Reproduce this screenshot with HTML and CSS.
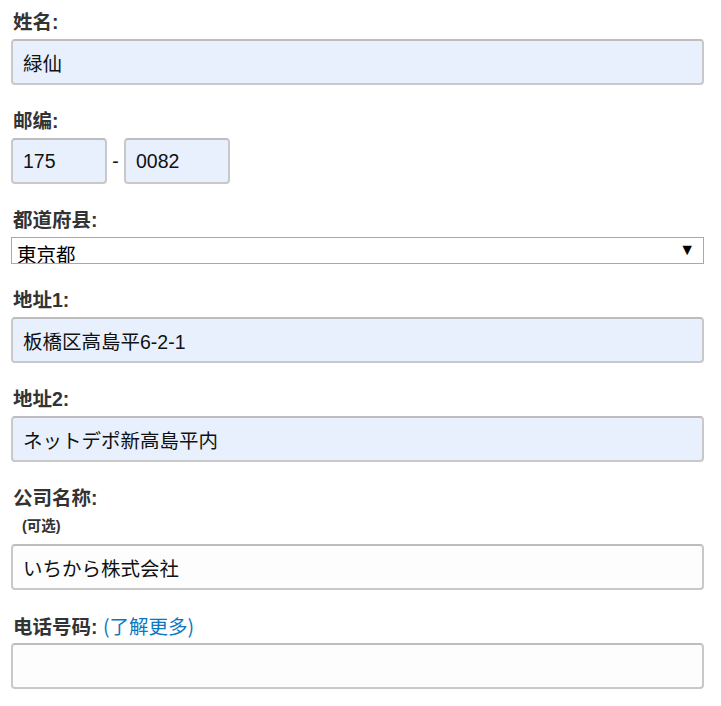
FILE: index.html
```html
<!DOCTYPE html>
<html lang="zh">
<head>
	<meta charset="UTF-8">
	<title>地址</title>
	<link rel="stylesheet" href="styles.css">
</head>
<body>
	<form class="address-form">
		<div class="field">
			<label class="field-label" for="name">姓名:</label>
			<input class="text-input filled" type="text" id="name" value="緑仙">
		</div>
		<div class="field">
			<label class="field-label" for="zip1">邮编:</label>
			<div class="zip-row">
				<input class="text-input filled zip-first" type="text" id="zip1" value="175">
				<span class="zip-dash">-</span>
				<input class="text-input filled zip-second" type="text" id="zip2" value="0082">
			</div>
		</div>
		<div class="field">
			<label class="field-label" for="pref">都道府县:</label>
			<div class="select-wrap">
				<select class="pref-select" id="pref">
					<option>東京都</option>
					<option>大阪府</option>
					<option>北海道</option>
				</select>
			</div>
		</div>
		<div class="field">
			<label class="field-label" for="addr1">地址1:</label>
			<input class="text-input filled" type="text" id="addr1" value="板橋区高島平6-2-1">
		</div>
		<div class="field">
			<label class="field-label" for="addr2">地址2:</label>
			<input class="text-input filled" type="text" id="addr2" value="ネットデポ新高島平内">
		</div>
		<div class="field">
			<label class="field-label" for="company">公司名称:</label>
			<div class="optional">(可选)</div>
			<input class="text-input" type="text" id="company" value="いちから株式会社">
		</div>
		<div class="field">
			<label class="field-label" for="tel">电话号码: <a class="more-link" href="#">(了解更多)</a></label>
			<input class="text-input" type="text" id="tel">
		</div>
	</form>
</body>
</html>
```

FILE: styles.css
```css
*{padding:0;margin:0;box-sizing:border-box;}
body{
	font-family:"Liberation Sans","Noto Sans CJK SC",sans-serif;
	color:#333;
	background:#fff;
}
.address-form{
	width:693px;
	margin-left:11px;
	padding-top:9px;
}
.field{margin-bottom:23px;}
.field-label{
	display:block;
	height:26px;
	line-height:26px;
	margin:0 0 4px 2px;
	font-size:19.5px;
	font-weight:bold;
	color:#333;
}
.more-link{
	font-family:"Noto Sans CJK SC",sans-serif;
	font-weight:normal;
	color:#0a78c0;
	text-decoration:none;
}
.optional{
	height:29px;
	line-height:20px;
	margin:-4px 0 4px 11px;
	padding-top:5px;
	font-size:14.5px;
	font-weight:bold;
	color:#333;
}

.text-input{
	display:block;
	width:100%;
	height:46px;
	padding:0 10px;
	border:2px solid #c9c9c9;
	border-top-color:#bdbdbd;
	border-radius:4px;
	background:#fdfdfd;
	font-family:"Liberation Sans","Noto Sans CJK SC",sans-serif;
	font-size:19.5px;
	color:#111;
	outline:none;
}
.text-input.filled{background:#e8f0fe;}

.zip-row{
	display:flex;
	align-items:center;
}
.zip-first{width:96px;}
.zip-second{width:106px;}
.zip-dash{
	width:17px;
	text-align:center;
	font-size:19.5px;
	color:#111;
}

.select-wrap{position:relative;}
.select-wrap::after{
	content:"\25BC";
	position:absolute;
	right:9px;
	top:4px;
	font-size:16px;
	color:#000;
	pointer-events:none;
}
.pref-select{
	display:block;
	width:100%;
	height:27px;
	padding:6px 0 0 5px;
	border:1px solid #a9a9a9;
	border-radius:0;
	background:#fff;
	font-family:"Liberation Sans","Noto Sans CJK SC",sans-serif;
	font-size:19.5px;
	color:#000;
	-webkit-appearance:none;
	appearance:none;
	outline:none;
}
```
